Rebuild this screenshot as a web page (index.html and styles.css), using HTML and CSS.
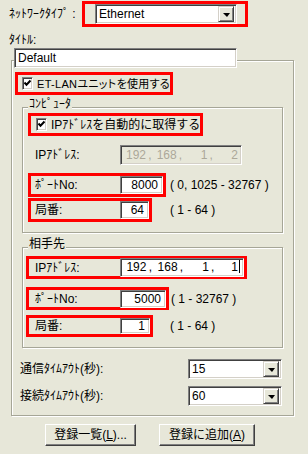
FILE: index.html
```html
<!DOCTYPE html>
<html lang="ja">
<head>
<meta charset="UTF-8">
<title>ネットワーク設定</title>
<link rel="stylesheet" href="styles.css">
</head>
<body>
<div class="dialog">
    <div class="net-row">
        <span class="net-label">ﾈｯﾄﾜｰｸﾀｲﾌﾟ :</span>
        <div class="mark net-mark">
            <div class="combo net-combo"><span class="combo-value">Ethernet</span><span class="arrow"></span></div>
        </div>
    </div>

    <div class="title-label">ﾀｲﾄﾙ:</div>
    <div class="edit title-edit">Default</div>

    <div class="group outer">
        <div class="mark etlan">
            <span class="check"><svg width="9" height="9" viewBox="0 0 9 9"><path d="M1.5 3.5 L3.5 5.8 L7.5 1.5" fill="none" stroke="#000" stroke-width="2"/></svg></span>
            <span class="check-text">ET-LANユニットを使用する</span>
        </div>

        <div class="group pc">
            <div class="legend">ｺﾝﾋﾟｭｰﾀ</div>
            <div class="mark auto-ip">
                <span class="check"><svg width="9" height="9" viewBox="0 0 9 9"><path d="M1.5 3.5 L3.5 5.8 L7.5 1.5" fill="none" stroke="#000" stroke-width="2"/></svg></span>
                <span class="check-text">IPｱﾄﾞﾚｽを自動的に取得する</span>
            </div>
            <div class="ip-row">
                <span class="field-label">IPｱﾄﾞﾚｽ:</span>
                <div class="edit ip disabled">
                    <span class="seg">192</span><span class="sep">,</span><span class="seg">168</span><span class="sep">,</span><span class="seg">1</span><span class="sep">,</span><span class="seg">2</span>
                </div>
            </div>
            <div class="field-row pc-port">
                <div class="mark">
                    <span class="field-label">ﾎﾟｰﾄNo:</span>
                    <div class="edit num">8000</div>
                </div>
                <span class="hint">( 0, 1025 - 32767 )</span>
            </div>
            <div class="field-row pc-station">
                <div class="mark">
                    <span class="field-label">局番:</span>
                    <div class="edit num">64</div>
                </div>
                <span class="hint">( 1 - 64 )</span>
            </div>
        </div>

        <div class="group peer">
            <div class="legend">相手先</div>
            <div class="field-row peer-ip">
                <div class="mark">
                    <span class="field-label">IPｱﾄﾞﾚｽ:</span>
                    <div class="edit ip">
                        <span class="seg">192</span><span class="sep">,</span><span class="seg">168</span><span class="sep">,</span><span class="seg">1</span><span class="sep">,</span><span class="seg">1<span class="caret"></span></span>
                    </div>
                </div>
            </div>
            <div class="field-row peer-port">
                <div class="mark">
                    <span class="field-label">ﾎﾟｰﾄNo:</span>
                    <div class="edit num">5000</div>
                </div>
                <span class="hint">( 1 - 32767 )</span>
            </div>
            <div class="field-row peer-station">
                <div class="mark">
                    <span class="field-label">局番:</span>
                    <div class="edit num">1</div>
                </div>
                <span class="hint">( 1 - 64 )</span>
            </div>
        </div>

        <div class="timeout-row first">
            <span class="timeout-label">通信ﾀｲﾑｱｳﾄ(秒):</span>
            <div class="combo timeout-combo"><span class="combo-value">15</span><span class="arrow"></span></div>
        </div>
        <div class="timeout-row">
            <span class="timeout-label">接続ﾀｲﾑｱｳﾄ(秒):</span>
            <div class="combo timeout-combo"><span class="combo-value">60</span><span class="arrow"></span></div>
        </div>
    </div>

    <div class="buttons">
        <button class="btn list">登録一覧(<u>L</u>)...</button>
        <button class="btn add">登録に追加(<u>A</u>)</button>
    </div>
</div>
</body>
</html>
```

FILE: styles.css
```css
* {
    box-sizing: border-box;
}

html,
body {
    margin: 0;
    padding: 0;
    background-color: #e7e7d9;
}

body {
    font-family: "Liberation Sans", "Noto Sans CJK JP", sans-serif;
    font-size: 12px;
    line-height: 14px;
    color: #000;
}

.dialog {
    width: 308px;
    height: 454px;
    overflow: hidden;
}

/* red annotation boxes */
.mark {
    border: 3px solid #f00;
    display: flex;
    align-items: center;
}

/* sunken edit box */
.edit,
.combo {
    background-color: #fff;
    border: 1px solid;
    border-color: #808080 #fff #fff #808080;
    box-shadow: inset 1px 1px #404040, inset -1px -1px #d4d0c8;
    height: 20px;
    line-height: 16px;
    padding: 1px 3px;
    white-space: nowrap;
}

.combo {
    display: flex;
    align-items: center;
    padding: 2px;
}

.combo-value {
    flex: 1;
    padding-left: 1px;
}

.arrow {
    width: 16px;
    height: 16px;
    background-color: #e7e7d9;
    border: 1px solid;
    border-color: #d4d0c8 #404040 #404040 #d4d0c8;
    box-shadow: inset 1px 1px #fff, inset -1px -1px #808080;
    display: flex;
    align-items: center;
    justify-content: center;
}

.arrow::after {
    content: "";
    border-left: 4px solid transparent;
    border-right: 3px solid transparent;
    border-top: 4px solid #000;
    margin-top: 1px;
}

/* network type */
.net-row {
    display: flex;
    align-items: center;
    height: 26px;
    margin-top: 1px;
    padding-left: 9px;
}

.net-label {
    width: 73px;
}

.net-mark {
    width: 166px;
    height: 26px;
    padding: 0 8px 0 10px;
}

.net-combo {
    width: 142px;
}

.title-label {
    margin: 6px 0 0 9px;
}

.title-edit {
    position: relative;
    z-index: 1;
    width: 223px;
    margin: 1px 0 0 14px;
}

/* group boxes */
.group {
    border: 1px solid #a6a697;
    box-shadow: inset 1px 1px #fff, 1px 1px #fff;
}

.outer {
    width: 283px;
    margin: -8px 0 0 11px;
    padding-bottom: 9px;
}

.legend {
    width: fit-content;
    margin: -11px 0 0 5px;
    padding: 0 1px;
    background-color: #e7e7d9;
}

.pc {
    width: 261px;
    margin: 12px 0 0 10px;
    padding-bottom: 10px;
}

.peer {
    width: 261px;
    margin: 14px 0 0 10px;
    padding-bottom: 10px;
}

/* checkboxes */
.check {
    width: 13px;
    height: 13px;
    background-color: #fff;
    border: 1px solid;
    border-color: #808080 #fff #fff #808080;
    box-shadow: inset 1px 1px #404040, inset -1px -1px #d4d0c8;
    display: flex;
    align-items: center;
    justify-content: center;
}

.check-text {
    margin-left: 4px;
    white-space: nowrap;
}

.etlan {
    width: 158px;
    height: 23px;
    margin: 11px 0 0 3px;
    padding-left: 4px;
}

.etlan .check-text {
    font-size: 11px;
    font-feature-settings: "palt";
    letter-spacing: 0.3px;
}

.auto-ip {
    width: 175px;
    height: 23px;
    margin: 2px 0 0 5px;
    padding-left: 5px;
}

/* field rows */
.field-label {
    width: 85px;
    white-space: nowrap;
}

.ip-row {
    display: flex;
    align-items: center;
    height: 20px;
    margin: 9px 0 0 12px;
}

.field-row {
    display: flex;
    align-items: center;
}

.field-row .mark {
    padding-left: 4px;
}

.edit.num {
    text-align: right;
    height: 18px;
    line-height: 14px;
    padding-right: 4px;
}

.hint {
    white-space: nowrap;
}

.ip {
    display: flex;
    padding-left: 2px;
}

.ip .seg {
    width: 24px;
    text-align: right;
}

.ip .sep {
    width: 8px;
    text-align: center;
}

.disabled {
    width: 122px;
    background-color: #e7e7d9;
    color: #aca899;
}

.caret {
    display: inline-block;
    width: 1px;
    height: 13px;
    margin-left: 1px;
    vertical-align: -2px;
    background-color: #000;
}

.pc-port {
    margin: 8px 0 0 5px;
}

.pc-port .mark {
    width: 138px;
    height: 24px;
}

.pc-port .edit {
    width: 43px;
}

.pc-port .hint {
    margin-left: 4px;
}

.pc-station {
    margin: 1px 0 0 5px;
}

.pc-station .mark {
    width: 124px;
    height: 24px;
}

.pc-station .edit {
    width: 29px;
}

.pc-station .hint {
    margin-left: 18px;
}

.peer-ip {
    margin: 5px 0 0 3px;
}

.peer-ip .mark {
    width: 221px;
    height: 23px;
    padding-left: 6px;
}

.peer-ip .edit {
    width: 124px;
    height: 19px;
    line-height: 15px;
}

.peer-port {
    margin: 8px 0 0 3px;
}

.peer-port .mark {
    width: 143px;
    height: 23px;
    padding-left: 6px;
}

.peer-port .edit {
    width: 46px;
}

.peer-port .hint {
    margin-left: 2px;
}

.peer-station {
    margin: 5px 0 0 3px;
}

.peer-station .mark {
    width: 127px;
    height: 22px;
    padding-left: 6px;
}

.peer-station .edit {
    width: 30px;
    height: 16px;
    line-height: 12px;
}

.peer-station .hint {
    margin-left: 17px;
}

/* timeouts */
.timeout-row {
    display: flex;
    align-items: center;
    height: 20px;
    margin: 7px 0 0 8px;
}

.timeout-row.first {
    margin-top: 11px;
}

.timeout-label {
    width: 168px;
    white-space: nowrap;
}

.timeout-combo {
    width: 94px;
}

/* buttons */
.buttons {
    display: flex;
    gap: 23px;
    margin-top: 8px;
    padding-left: 45px;
}

.btn {
    height: 22px;
    padding: 0;
    font: inherit;
    color: #000;
    background-color: #e7e7d9;
    border: 1px solid;
    border-color: #fff #404040 #404040 #fff;
    box-shadow: inset -1px -1px #808080;
}

.btn.list {
    width: 91px;
}

.btn.add {
    width: 96px;
}
```
